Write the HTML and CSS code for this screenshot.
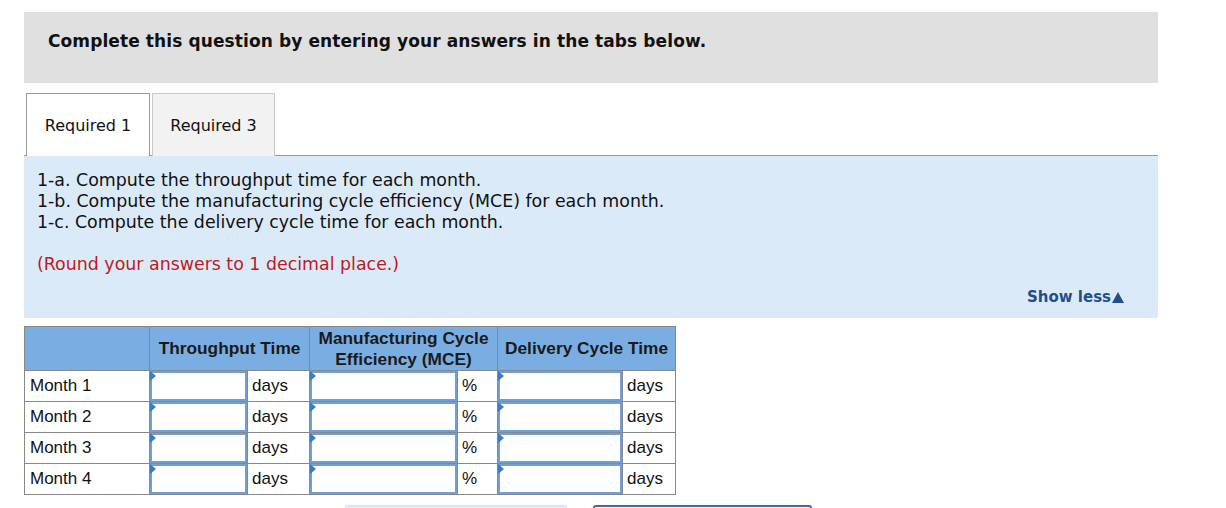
FILE: index.html
```html
<!DOCTYPE html>
<html>
<head>
<meta charset="utf-8">
<link rel="stylesheet" href="styles.css">
</head>
<body>
<div class="page">
  <div class="banner">Complete this question by entering your answers in the tabs below.</div>
  <div class="tabs">
    <div class="tab active">Required 1</div>
    <div class="tab">Required 3</div>
  </div>
  <div class="panel">
    <div class="instr">
      <div>1-a. Compute the throughput time for each month.</div>
      <div>1-b. Compute the manufacturing cycle efficiency (MCE) for each month.</div>
      <div>1-c. Compute the delivery cycle time for each month.</div>
    </div>
    <div class="round">(Round your answers to 1 decimal place.)</div>
    <div class="showless">Show less<span class="tri"></span></div>
  </div>
  <table class="grid">
    <colgroup>
      <col class="c-label"><col class="c-in1"><col class="c-u1"><col class="c-in2"><col class="c-u2"><col class="c-in3"><col class="c-u3">
    </colgroup>
    <thead>
      <tr>
        <th></th>
        <th colspan="2">Throughput Time</th>
        <th colspan="2">Manufacturing Cycle<br>Efficiency (MCE)</th>
        <th colspan="2">Delivery Cycle Time</th>
      </tr>
    </thead>
    <tbody>
      <tr><td class="lbl">Month 1</td><td class="inp"><div class="box"></div></td><td class="unit">days</td><td class="inp"><div class="box"></div></td><td class="unit">%</td><td class="inp"><div class="box"></div></td><td class="unit">days</td></tr>
      <tr><td class="lbl">Month 2</td><td class="inp"><div class="box"></div></td><td class="unit">days</td><td class="inp"><div class="box"></div></td><td class="unit">%</td><td class="inp"><div class="box"></div></td><td class="unit">days</td></tr>
      <tr><td class="lbl">Month 3</td><td class="inp"><div class="box"></div></td><td class="unit">days</td><td class="inp"><div class="box"></div></td><td class="unit">%</td><td class="inp"><div class="box"></div></td><td class="unit">days</td></tr>
      <tr><td class="lbl">Month 4</td><td class="inp"><div class="box"></div></td><td class="unit">days</td><td class="inp"><div class="box"></div></td><td class="unit">%</td><td class="inp"><div class="box"></div></td><td class="unit">days</td></tr>
    </tbody>
  </table>
  <div class="buttons">
    <div class="btn light"></div>
    <div class="btn dark"></div>
  </div>
</div>
</body>
</html>
```

FILE: styles.css
```css
html, body {
  margin: 0;
  padding: 0;
  background: #ffffff;
  overflow: hidden;
}
.page {
  width: 1134px;
  margin-left: 24px;
  padding-top: 12px;
  font-family: "DejaVu Sans", Verdana, sans-serif;
  color: #111;
}
.banner {
  background: #e0e0e0;
  height: 71px;
  box-sizing: border-box;
  padding: 19px 0 0 24px;
  font-weight: bold;
  font-size: 17px;
  letter-spacing: 0.1px;
  line-height: 21px;
  color: #111;
}
.tabs {
  display: flex;
  margin-top: 10px;
  padding-left: 2px;
  gap: 2px;
  border-bottom: 1px solid #999;
  height: 62px;
}
.tab {
  box-sizing: border-box;
  height: 63px;
  margin-bottom: -1px;
  display: flex;
  align-items: center;
  justify-content: center;
  font-size: 16px;
  background: #f2f2f2;
  border: 1px solid #c8c8c8;
  border-bottom: none;
  width: 123px;
}
.tab.active {
  background: #fff;
  border: 1px solid #999;
  border-bottom: none;
  width: 124px;
  z-index: 1;
}
.panel {
  background: #dbeaf9;
  height: 162px;
  box-sizing: border-box;
  padding: 14px 34px 0 13px;
  font-size: 17.4px;
  line-height: 21px;
  display: flex;
  flex-direction: column;
}
.instr { color: #111; }
.round {
  color: #bf1a20;
  margin-top: 21px;
}
.showless {
  align-self: flex-end;
  margin-top: 12px;
  color: #1f4f8d;
  font-weight: bold;
  font-size: 15px;
  display: flex;
  align-items: center;
}
.tri {
  width: 0;
  height: 0;
  margin-left: 1px;
  margin-top: -1px;
  border-left: 6.5px solid transparent;
  border-right: 6.5px solid transparent;
  border-bottom: 11px solid #1f4f8d;
}
.grid {
  margin-top: 8px;
  border-collapse: collapse;
  font-family: "Liberation Sans", Arial, sans-serif;
  font-size: 17px;
  color: #111;
  table-layout: fixed;
  width: 651px;
}
.c-label { width: 125px; }
.c-in1 { width: 98px; }
.c-u1 { width: 62px; }
.c-in2 { width: 148px; }
.c-u2 { width: 40px; }
.c-in3 { width: 125px; }
.c-u3 { width: 53px; }
.grid th {
  background: #7aaee2;
  border: 1px solid #888;
  height: 43px;
  padding: 0;
  font-weight: bold;
  font-size: 17.3px;
  line-height: 21px;
  color: #1a1a1a;
}
.grid td {
  border: 1px solid #888;
  height: 30px;
  padding: 0;
}
.grid td.lbl { padding-left: 5px; }
.grid td.unit { padding-left: 4px; }
.box {
  height: 30px;
  box-sizing: border-box;
  border: 2px solid #6f9fd6;
  background: #fff;
  position: relative;
}
.box::before {
  content: "";
  position: absolute;
  left: -2px;
  top: -2px;
  border-top: 5px solid transparent;
  border-bottom: 5px solid transparent;
  border-left: 6px solid #3b7bc6;
}
.buttons {
  display: flex;
  margin-top: 10px;
  padding-left: 321px;
  gap: 26px;
}
.btn {
  width: 222px;
  height: 5px;
  box-sizing: border-box;
  border-radius: 3px 3px 0 0;
}
.btn.light {
  background: #e3ecf6;
  border: 1px solid #d4e0ee;
  border-bottom: none;
}
.btn.dark {
  background: #fff;
  border: 2px solid #3d6aa6;
  border-bottom: none;
  width: 219px;
}
```
